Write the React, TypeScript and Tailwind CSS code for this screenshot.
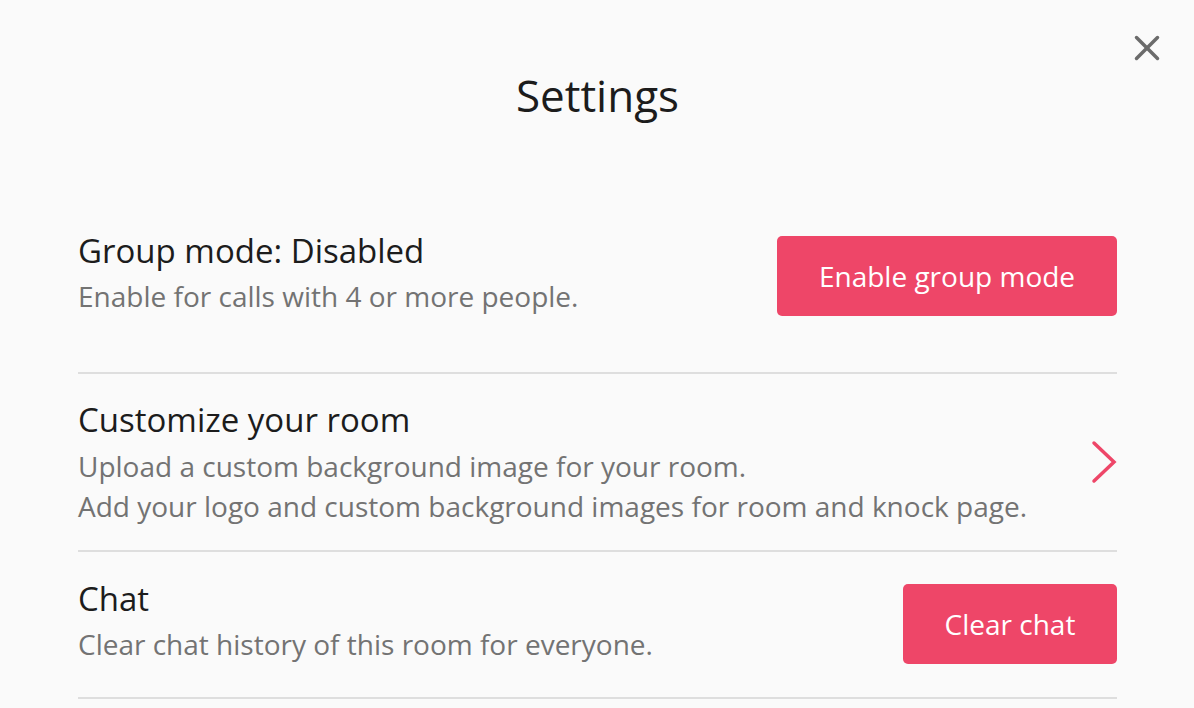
import { X } from 'lucide-react';

const font = { fontFamily: '"Open Sans", "Liberation Sans", sans-serif' };

const Chevron = () => (
  <svg width="30" height="48" viewBox="0 0 30 48" fill="none" className="-mr-[3px] text-[#ee4668]">
    <polyline
      points="4,5 24,24 4,43"
      stroke="currentColor"
      strokeWidth="3.5"
      strokeLinecap="round"
      strokeLinejoin="miter"
    />
  </svg>
);

const Settings = () => {
  return (
    <div className="relative min-h-[708px] w-full bg-[#fafafa] pl-[78px] pr-[77px] text-[#1c1c1c]" style={font}>
      <button className="absolute right-[26px] top-[27px] text-[#6b6b6b]" aria-label="Close">
        <X size={42} strokeWidth={2} />
      </button>

      <h1 className="pt-[67px] text-center text-[44px] leading-[56px]">Settings</h1>

      <div className="mt-[106px] flex flex-col">
        {/* group mode */}
        <div className="flex items-end justify-between border-b-2 border-[#dedede] pb-[56px]">
          <div>
            <div className="text-[33px] leading-[44px]">Group mode: Disabled</div>
            <p className="mt-[3px] text-[28px] leading-[40px] text-[#737373]">
              Enable for calls with 4 or more people.
            </p>
          </div>
          <button className="flex h-[80px] w-[340px] items-center justify-center rounded-[5px] bg-[#ee4668] text-[28px] font-medium text-white">
            Enable group mode
          </button>
        </div>

        {/* customize */}
        <div className="flex items-center justify-between border-b-2 border-[#dedede] pb-[24px] pt-[24px]">
          <div>
            <div className="text-[33px] leading-[44px]">Customize your room</div>
            <p className="mt-[4px] text-[28px] leading-[40px] text-[#737373]">
              Upload a custom background image for your room.
              <br />
              Add your logo and custom background images for room and knock page.
            </p>
          </div>
          <Chevron />
        </div>

        {/* chat */}
        <div className="flex items-end justify-between border-b-2 border-[#dedede] pb-[33px] pt-[25px]">
          <div>
            <div className="text-[33px] leading-[44px]">Chat</div>
            <p className="mt-[3px] text-[28px] leading-[40px] text-[#737373]">
              Clear chat history of this room for everyone.
            </p>
          </div>
          <button className="flex h-[80px] w-[214px] items-center justify-center rounded-[5px] bg-[#ee4668] text-[28px] font-medium text-white">
            Clear chat
          </button>
        </div>
      </div>
    </div>
  );
};

export default function App() {
  return <Settings />;
}
